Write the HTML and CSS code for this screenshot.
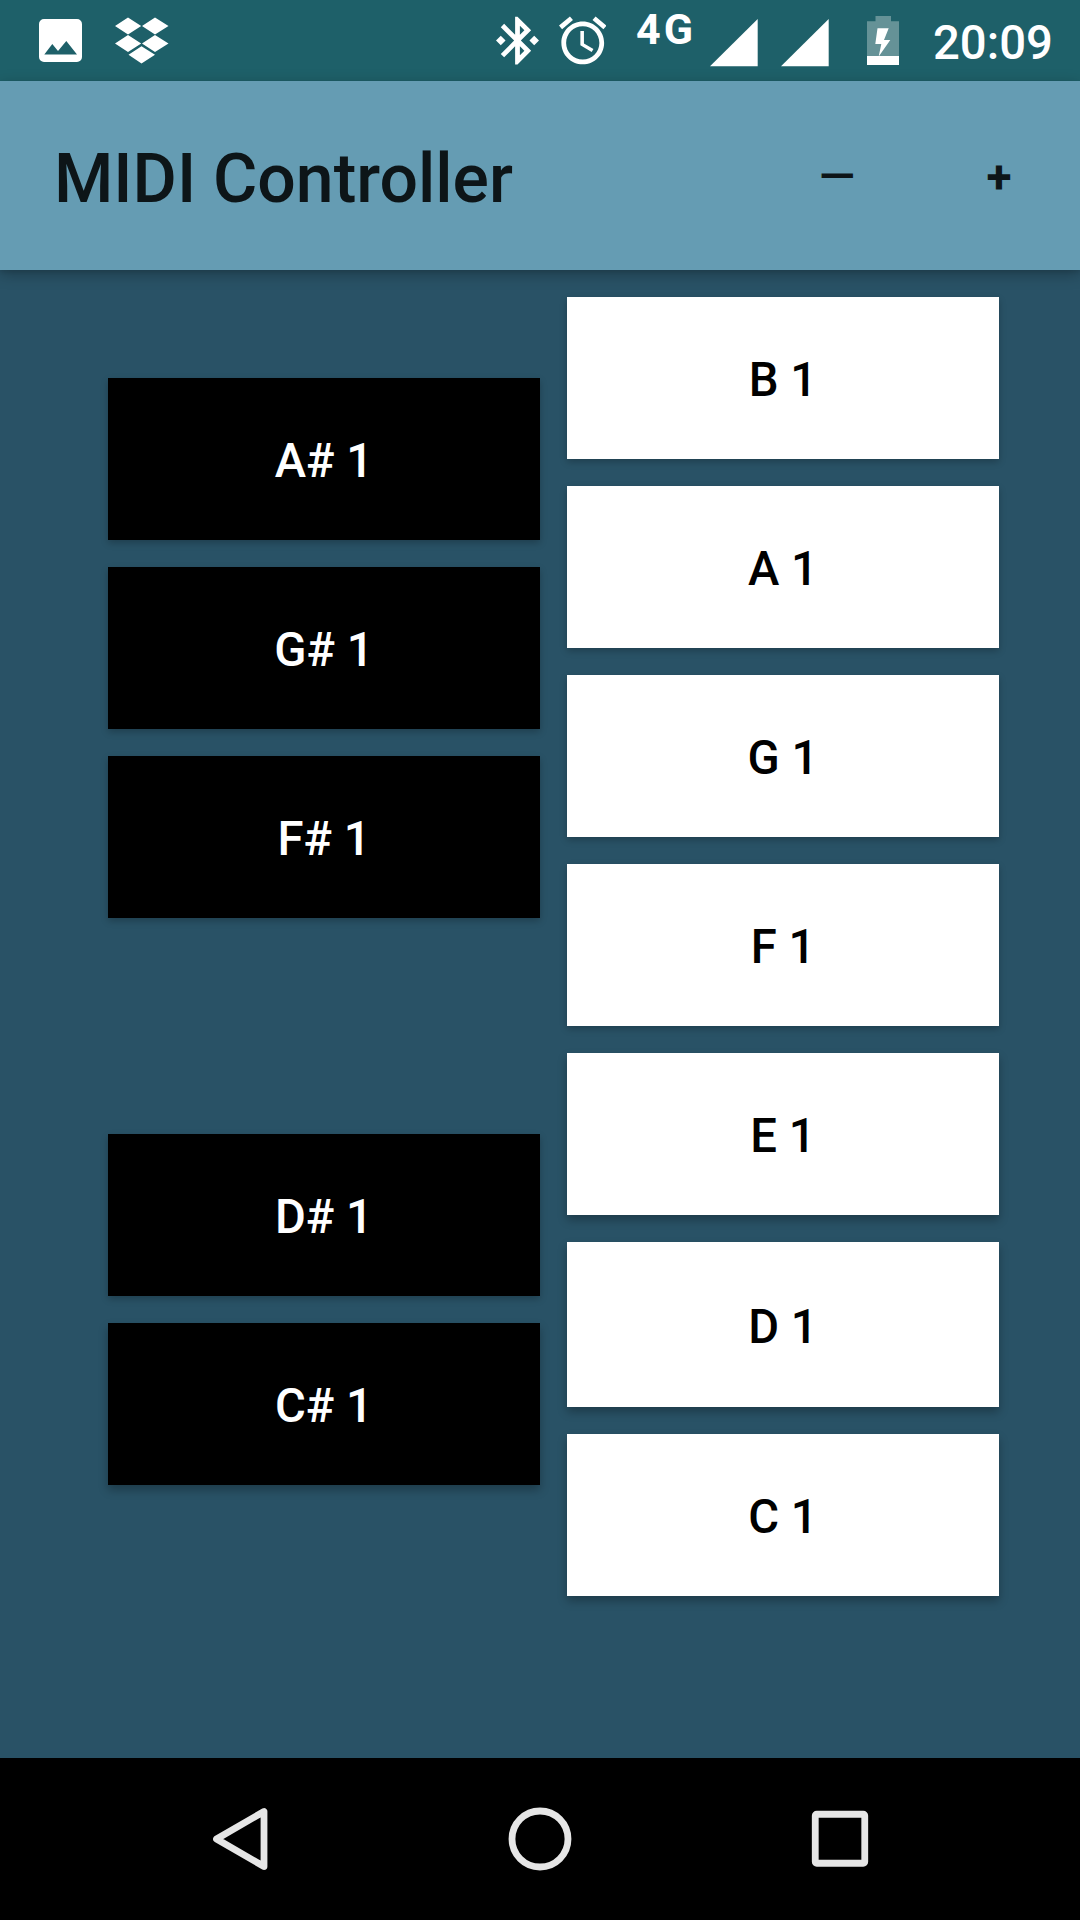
FILE: index.html
```html
<!DOCTYPE html>
<html lang="en">
<head>
<meta charset="utf-8">
<title>MIDI Controller</title>
<link rel="stylesheet" href="styles.css">
</head>
<body>
<div class="screen">
  <header class="status">
    <div class="status-group">
      <svg class="i-photo" viewBox="39 0 43 81"><path fill-rule="evenodd" d="M44 19H77a5 5 0 0 1 5 5V57a5 5 0 0 1-5 5H44a5 5 0 0 1-5-5V24a5 5 0 0 1 5-5ZM44.3 54.5H77L66.3 41 58 51 52.3 44Z"/></svg>
      <svg class="i-box" viewBox="114 0 55 81"><path d="M115 26 128 17.500 141.200 26 128 34.500ZM142 26 155 17.500 168.500 26 155 34.500ZM115 43.500 128 35 141.200 43.500 128 52ZM142 43.500 155 35 168.500 43.500 155 52ZM128.500 54.800 141.500 46.200 155 54.800 141.500 63.500Z"/></svg>
    </div>
    <div class="status-group">
      <svg class="i-bt" viewBox="3 -4.9 18 33.75"><path d="M7 12l-2-2-2 2 2 2 2-2zm10.710-4.290L12 2h-1v7.590L6.410 5 5 6.410 10.590 12 5 17.590 6.410 19 11 14.410V22h1l5.710-5.710-4.300-4.290 4.300-4.290zM13 5.830l1.880 1.880L13 9.590V5.830zm1.880 10.460L13 18.170v-3.760l1.880 1.880zM19 10l-2 2 2 2 2-2-2-2z"/></svg>
      <svg class="i-alarm" viewBox="2 -5.05 20 34.100"><path d="M22 5.720l-4.600-3.860-1.290 1.530 4.600 3.860L22 5.720zM7.880 3.390L6.600 1.860 2 5.710l1.290 1.530 4.590-3.850zM12.500 8H11v6l4.750 2.850.75-1.230-4-2.370V8zM12 4c-4.970 0-9 4.030-9 9s4.020 9 9 9c4.970 0 9-4.030 9-9s-4.030-9-9-9zm0 16c-3.870 0-7-3.130-7-7s3.130-7 7-7 7 3.130 7 7-3.130 7-7 7z"/></svg>
      <span class="network">4G</span>
      <svg class="i-signal" viewBox="0 0 48 81"><path d="M0 66.300 47.700 19V66.300Z"/></svg>
      <svg class="i-signal second" viewBox="0 0 48 81"><path d="M0 66.300 47.700 19V66.300Z"/></svg>
      <svg class="i-battery" viewBox="867 0 32 81"><path class="dim" d="M875.500 16H891V21.300H899V56H867V21.300H875.500Z"/><path d="M867 56H899V65H867ZM877.500 28.300H888.700L884 40H890.300L878.700 56.500 881.300 44H875.300Z"/></svg>
      <span class="clock">20:09</span>
    </div>
  </header>
  <div class="appbar">
    <h1 class="title">MIDI Controller</h1>
    <div class="actions"><button class="action">—</button><button class="action plus">+</button></div>
  </div>
  <main class="keys">
    <div class="column sharps">
      <button class="key black">A# 1</button>
      <button class="key black">G# 1</button>
      <button class="key black">F# 1</button>
      <button class="key black after-gap">D# 1</button>
      <button class="key black low">C# 1</button>
    </div>
    <div class="column">
      <button class="key">B 1</button>
      <button class="key">A 1</button>
      <button class="key">G 1</button>
      <button class="key">F 1</button>
      <button class="key low">E 1</button>
      <button class="key tall low">D 1</button>
      <button class="key low">C 1</button>
    </div>
  </main>
  <nav class="nav">
    <svg class="nav-icon" viewBox="0 0 70 70"><path d="M11.500 35 59 7.500V62.500Z"/></svg>
    <svg class="nav-icon" viewBox="0 0 70 70"><circle cx="35" cy="35" r="28"/></svg>
    <svg class="nav-icon" viewBox="0 0 70 70"><rect x="10.250" y="10.250" width="49.500" height="49" rx="1.500"/></svg>
  </nav>
</div>
</body>
</html>
```
FILE: styles.css
```css
* { box-sizing: border-box; }
body { margin: 0; font-family: Roboto, sans-serif; font-weight: 500; }
button { border: 0; padding: 0; background: none; font: inherit; color: inherit; }
svg { display: block; flex: none; }

.screen { width: 1080px; height: 1920px; display: flex; flex-direction: column; background: #295266; overflow: hidden; }

.status { height: 81px; flex: none; display: flex; justify-content: space-between; padding: 0 29px 0 39px; background: #1e6069; color: #fff; fill: #fff; }
.status-group { display: flex; }
.status svg { height: 81px; }
.i-photo { width: 43px; }
.i-box { width: 55px; margin-left: 32px; }
.i-bt { width: 43px; }
.i-alarm { width: 47.500px; margin-left: 20px; }
.network { width: 74px; margin-left: 30px; padding-top: 4px; font-size: 43px; line-height: 50px; font-weight: 700; letter-spacing: 3px; }
.i-signal { width: 48px; }
.second { margin-left: 23px; }
.i-battery { width: 32px; margin-left: 38px; }
.dim { fill: #659297; }
.clock { width: 118px; margin-left: 34px; font-size: 47.250px; line-height: 87px; white-space: nowrap; }

.appbar { height: 189px; flex: none; display: flex; align-items: center; justify-content: space-between; padding-left: 54px; background: #659cb3; color: #0d1518; box-shadow: 0 4px 14px rgba(0,0,0,.28), 0 2px 4px rgba(0,0,0,.08); }
.title { margin: 0; padding-top: 7px; font-size: 67.900px; line-height: 80px; font-weight: 500; white-space: nowrap; }
.actions { display: flex; }
.action { width: 162px; height: 162px; padding-top: 3px; font-size: 47.250px; }
.plus { font-size: 46px; font-weight: 700; }

.keys { flex: 1; display: flex; gap: 27px; padding: 27px 81px 0 108px; }
.column { width: 432px; display: flex; flex-direction: column; gap: 27px; }
.sharps { padding-top: 81px; }
.key { height: 162px; flex: none; padding-top: 4px; background: #fff; color: #000; font-size: 47.250px; line-height: 56px; box-shadow: 0 3px 7px rgba(0,0,0,.23); }
.black { background: #000; color: #fff; }
.after-gap { margin-top: 189px; }
.tall { height: 165px; }
.low { box-shadow: 0 5px 9px rgba(0,0,0,.28); }

.nav { height: 162px; flex: none; display: flex; justify-content: center; align-items: center; gap: 230px; background: #000; }
.nav-icon { width: 70px; height: 70px; fill: none; stroke: #e6e6e6; stroke-width: 6.800; stroke-linejoin: round; }
```
